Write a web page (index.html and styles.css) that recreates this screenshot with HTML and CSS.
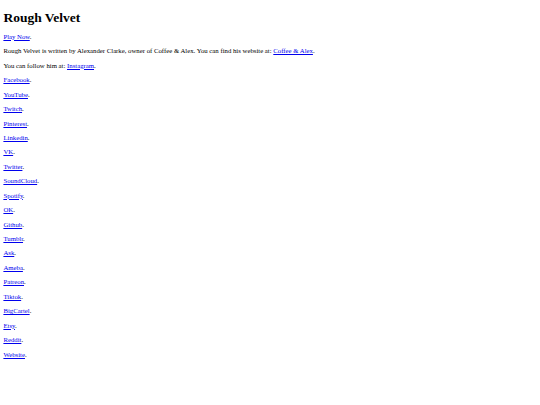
FILE: index.html
```html
<!DOCTYPE html>
<html>
<head>
<meta charset="utf-8">
<title>Rough Velvet</title>
<link rel="stylesheet" href="styles.css">
</head>
<body>
<h1 class="title">Rough Velvet</h1>
<p class="line"><a href="#">Play Now</a>.</p>
<p class="line">Rough Velvet is written by Alexander Clarke, owner of Coffee &amp; Alex. You can find his website at: <a href="#">Coffee &amp; Alex</a>.</p>
<p class="line">You can follow him at: <a href="#">Instagram</a>.</p>
<p class="line"><a href="#">Facebook</a>.</p>
<p class="line"><a href="#">YouTube</a>.</p>
<p class="line"><a href="#">Twitch</a>.</p>
<p class="line"><a href="#">Pinterest</a>.</p>
<p class="line"><a href="#">Linkedin</a>.</p>
<p class="line"><a href="#">VK</a>.</p>
<p class="line"><a href="#">Twitter</a>.</p>
<p class="line"><a href="#">SoundCloud</a>.</p>
<p class="line"><a href="#">Spotify</a>.</p>
<p class="line"><a href="#">OK</a>.</p>
<p class="line"><a href="#">Github</a>.</p>
<p class="line"><a href="#">Tumblr</a>.</p>
<p class="line"><a href="#">Ask</a>.</p>
<p class="line"><a href="#">Ameba</a>.</p>
<p class="line"><a href="#">Patreon</a>.</p>
<p class="line"><a href="#">Tiktok</a>.</p>
<p class="line"><a href="#">BigCartel</a>.</p>
<p class="line"><a href="#">Etsy</a>.</p>
<p class="line"><a href="#">Reddit</a>.</p>
<p class="line"><a href="#">Website</a>.</p>
</body>
</html>
```

FILE: styles.css
```css
html, body {
  background: #fff;
}
body {
  margin: 3.4px;
  font-family: "Liberation Serif", "Times New Roman", serif;
  font-size: 6.75px;
  line-height: 7.8px;
  color: #000;
}
.title {
  font-size: 13.5px;
  line-height: 15.5px;
  font-weight: bold;
  margin: 7px 0;
}
.line {
  margin: 6.65px 0;
}
a {
  color: #0000ee;
  text-decoration: underline;
}
```
